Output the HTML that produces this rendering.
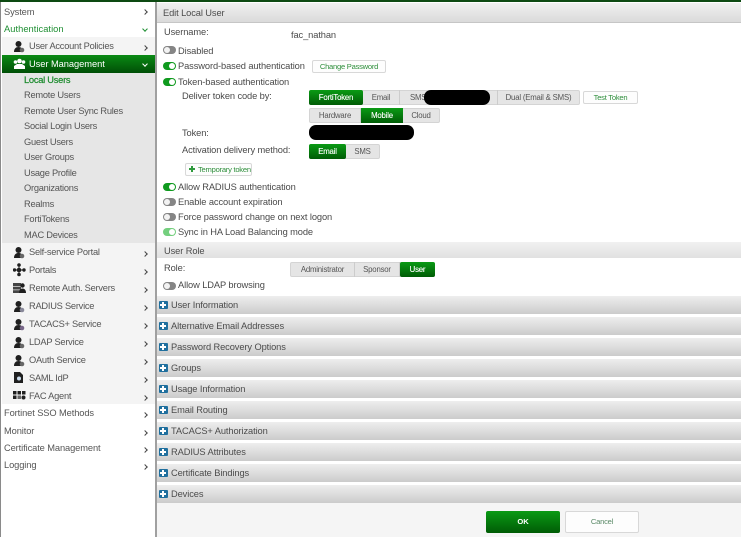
<!DOCTYPE html>
<html><head><meta charset="utf-8"><style>
html,body{margin:0;padding:0;background:#fff}
#p{position:relative;width:741px;height:537px;overflow:hidden;background:#fff;font-family:"Liberation Sans",sans-serif;font-size:9.3px;letter-spacing:-.1px;color:#4a4a4a;filter:blur(.3px)}
#p div{position:absolute;white-space:nowrap}
.t{line-height:12px;height:12px;margin-top:1.5px}
.n{color:#555}
.sub{letter-spacing:-.25px}
.bar{left:157px;width:584px;height:18px;background:linear-gradient(#eeeeee,#cbcbcb)}
.bt{left:171px;line-height:18px;color:#4c4c4c}
.pl{left:159px;width:8.500px;height:8.500px;margin-top:.5px;border-radius:1px;background:linear-gradient(#fff,#fff) center/6px 2px no-repeat,linear-gradient(#fff,#fff) center/2px 6px no-repeat,#1f6f9e}
.chev{left:143px;width:3px;height:3px;border-top:1.2px solid #444;border-right:1.2px solid #444;transform:rotate(45deg)}
.tog{left:163px;width:13px;height:8px;margin-top:-.5px;border-radius:4px;background:#0f9a1e}
.tog:after{content:"";position:absolute;right:1px;top:1px;width:6px;height:6px;border-radius:50%;background:#fff}
.off{background:#858585}.off:after{right:auto;left:1px;background:#f3f3f3}
.lt{background:#74cf7e}
.seg{height:15px;background:#e5e5e5;border:1px solid #d4d4d4;border-radius:2px;box-sizing:border-box}
.s{top:-1px;height:15px;line-height:15px;text-align:center;font-size:7.8px;letter-spacing:-.2px;color:#555;border-right:1px solid #ccc;box-sizing:border-box}
.on{background:linear-gradient(#0a9a14,#005c05);color:#fff;border-radius:2px;border:0;-webkit-text-stroke:.12px #fff}
.btn{background:#fdfdfd;border:1px solid #d8d8d8;border-radius:2px;box-sizing:border-box;color:#2f8f3c;font-size:7.600px;letter-spacing:-.25px;text-align:center}
.blk{background:#000;border-radius:7px}
</style></head><body><div id="p">
<div style="left:0;top:0;width:741px;height:2px;background:#0d4a12"></div>
<div style="left:0;top:2px;width:1px;height:535px;background:#8a8a8a"></div>
<div style="left:155px;top:2px;width:1.500px;height:535px;background:#a0a0a0"></div>

<div style="left:2px;top:37px;width:153px;height:367px;background:#f4f4f4"></div>
<div style="left:2px;top:55px;width:153px;height:18px;background:linear-gradient(#0a8a14,#004f06)"></div>
<div style="left:2px;top:73px;width:153px;height:170px;background:#e6e6e6"></div>

<div class="t n" style="left:4px;top:4px">System</div>
<div class="t" style="left:4px;top:21px;color:#1f8f33;letter-spacing:.05px">Authentication</div>
<div class="t n sub" style="left:29px;top:38.500px">User Account Policies</div>
<div class="t" style="left:29px;top:56px;color:#fff;letter-spacing:-.05px">User Management</div>
<div class="t sub" style="left:24px;top:72px;color:#1a8a2c;-webkit-text-stroke:.2px #1a8a2c">Local Users</div>
<div class="t n sub" style="left:24px;top:87.500px">Remote Users</div>
<div class="t n sub" style="left:24px;top:103px">Remote User Sync Rules</div>
<div class="t n sub" style="left:24px;top:118.500px">Social Login Users</div>
<div class="t n sub" style="left:24px;top:134px">Guest Users</div>
<div class="t n sub" style="left:24px;top:149.500px">User Groups</div>
<div class="t n sub" style="left:24px;top:165px">Usage Profile</div>
<div class="t n sub" style="left:24px;top:180.500px">Organizations</div>
<div class="t n sub" style="left:24px;top:196px">Realms</div>
<div class="t n sub" style="left:24px;top:211.500px">FortiTokens</div>
<div class="t n sub" style="left:24px;top:227.500px">MAC Devices</div>
<div class="t n sub" style="left:29px;top:244px">Self-service Portal</div>
<div class="t n sub" style="left:29px;top:262px">Portals</div>
<div class="t n sub" style="left:29px;top:280px">Remote Auth. Servers</div>
<div class="t n sub" style="left:29px;top:298px">RADIUS Service</div>
<div class="t n sub" style="left:29px;top:316px">TACACS+ Service</div>
<div class="t n sub" style="left:29px;top:334px">LDAP Service</div>
<div class="t n sub" style="left:29px;top:352px">OAuth Service</div>
<div class="t n sub" style="left:29px;top:370px">SAML IdP</div>
<div class="t n sub" style="left:29px;top:388px">FAC Agent</div>
<div class="t n" style="left:4px;top:405px">Fortinet SSO Methods</div>
<div class="t n" style="left:4px;top:423px">Monitor</div>
<div class="t n" style="left:4px;top:440px">Certificate Management</div>
<div class="t n" style="left:4px;top:457px">Logging</div>

<div class="chev" style="top:10px"></div>
<div class="chev" style="top:27px;transform:rotate(135deg);border-color:#1f8f33"></div>
<div class="chev" style="top:46px"></div>
<div class="chev" style="top:62px;transform:rotate(135deg);border-color:#fff"></div>
<div class="chev" style="top:252px"></div><div class="chev" style="top:270px"></div><div class="chev" style="top:288px"></div><div class="chev" style="top:306px"></div><div class="chev" style="top:324px"></div><div class="chev" style="top:342px"></div><div class="chev" style="top:360px"></div><div class="chev" style="top:378px"></div><div class="chev" style="top:396px"></div><div class="chev" style="top:413px"></div><div class="chev" style="top:431px"></div><div class="chev" style="top:448px"></div><div class="chev" style="top:465px"></div>

<svg style="position:absolute;left:13px;top:0" width="14" height="410" fill="#1f1f1f">
<g><circle cx="5.500" cy="44" r="3"/><path d="M1 52c0-3.500 2-5 4.500-5s4.500 1.500 4.500 5z"/><circle cx="9" cy="50" r="2.300" fill="#666"/></g>
<g fill="#fff"><circle cx="6.500" cy="61" r="2.300"/><circle cx="2.500" cy="62" r="1.800"/><circle cx="10.500" cy="62" r="1.800"/><path d="M1 69v-3l3-2h5l3 2v3z"/></g>
<g><circle cx="5.500" cy="250" r="3"/><path d="M1 258c0-3.500 2-5 4.500-5s4.500 1.500 4.500 5z"/><circle cx="9" cy="256" r="2.300" fill="#666"/></g>
<g><circle cx="6" cy="265" r="1.800"/><circle cx="1.500" cy="270" r="1.700"/><circle cx="11" cy="270" r="1.700"/><circle cx="6" cy="270" r="2.300"/><circle cx="6" cy="274.500" r="1.800"/><path d="M1 269.500h10v1H1zM5.500 265h1v9h-1z"/></g>
<g><rect x="0" y="283" width="8" height="10" fill="#444"/><path d="M0 286h8v.8H0zM0 289.500h8v.8H0z" fill="#ddd"/><circle cx="9.500" cy="285.500" r="2.200"/><path d="M6 293c0-3 1.500-4.500 3.500-4.500s3.500 1.500 3.500 4.500z"/></g>
<g><circle cx="5.500" cy="304" r="3"/><path d="M1 312c0-3.500 2-5 4.500-5s4.500 1.500 4.500 5z"/><circle cx="9" cy="310" r="2.300" fill="#889"/></g>
<g><circle cx="5.500" cy="322" r="3"/><path d="M1 330c0-3.500 2-5 4.500-5s4.500 1.500 4.500 5z"/><circle cx="9" cy="328" r="2.300" fill="#768"/></g>
<g><circle cx="5.500" cy="340" r="3"/><path d="M1 348c0-3.500 2-5 4.500-5s4.500 1.500 4.500 5z"/><circle cx="9" cy="346" r="2.300" fill="#666"/></g>
<g><circle cx="5.500" cy="358" r="3"/><path d="M1 366c0-3.500 2-5 4.500-5s4.500 1.500 4.500 5z"/><circle cx="9" cy="364" r="2.300" fill="#666"/></g>
<g><path d="M1 372h6l3 3v8H1z"/><circle cx="6" cy="378.500" r="2" fill="#cde"/></g>
<g><rect x="0" y="391" width="3.500" height="3.500"/><rect x="4.500" y="391" width="3.500" height="3.500"/><rect x="9" y="391" width="3.500" height="3.500"/><rect x="0" y="395.500" width="3.500" height="3.500"/><rect x="4.500" y="395.500" width="3.500" height="3.500" fill="#666"/><circle cx="10.500" cy="397.500" r="2"/></g>
</svg>

<div class="bar" style="top:3px;height:19px;background:linear-gradient(#f0f0f0,#dadada);border-bottom:1px solid #c6c6c6"></div>
<div class="t" style="left:163px;top:5px;color:#4c4c4c">Edit Local User</div>
<div class="t" style="left:164px;top:24.500px">Username:</div>
<div class="t" style="left:291px;top:27.500px">fac_nathan</div>

<div class="tog off" style="top:46px"></div><div class="t" style="left:178px;top:43px">Disabled</div>
<div class="tog" style="top:62px"></div><div class="t" style="left:178px;top:58.500px">Password-based authentication</div>
<div class="btn" style="left:312px;top:60px;width:74px;height:13px;line-height:12px">Change Password</div>
<div class="tog" style="top:78px"></div><div class="t" style="left:178px;top:74.500px">Token-based authentication</div>
<div class="t" style="left:182px;top:88px">Deliver token code by:</div>

<div class="seg" style="left:309px;top:90px;width:271px">
<div class="s on" style="left:-1px;width:54px">FortiToken</div>
<div class="s" style="left:53px;width:37px">Email</div>
<div class="s" style="left:90px;width:30px;text-align:left;padding-left:10px">SMS</div>
<div class="s" style="left:120px;width:68px"></div>
<div class="s" style="left:188px;width:81px;border:0">Dual (Email &amp; SMS)</div>
</div>
<div class="blk" style="left:424px;top:90px;width:66px;height:15px"></div>
<div class="btn" style="left:583px;top:91px;width:55px;height:13px;line-height:12px">Test Token</div>

<div class="seg" style="left:309px;top:108px;width:131px">
<div class="s" style="left:0;width:51px">Hardware</div>
<div class="s on" style="left:51px;width:42px;border-radius:0">Mobile</div>
<div class="s" style="left:93px;width:36px;border:0">Cloud</div>
</div>

<div class="t" style="left:182px;top:125px">Token:</div>
<div class="blk" style="left:309px;top:125px;width:105px;height:15px"></div>
<div class="t" style="left:182px;top:142px">Activation delivery method:</div>
<div class="seg" style="left:309px;top:144px;width:71px">
<div class="s on" style="left:-1px;width:37px">Email</div>
<div class="s" style="left:36px;width:33px;border:0">SMS</div>
</div>
<div class="btn" style="left:185px;top:163px;width:67px;height:13px;line-height:12px;text-align:left;padding-left:12px">Temporary token</div>
<div style="left:189px;top:168px;width:6px;height:2px;background:#2e9a3c"></div>
<div style="left:191px;top:166px;width:2px;height:6px;background:#2e9a3c"></div>

<div class="tog" style="top:183px"></div><div class="t" style="left:178px;top:179px">Allow RADIUS authentication</div>
<div class="tog off" style="top:198px"></div><div class="t" style="left:178px;top:194px">Enable account expiration</div>
<div class="tog off" style="top:213px"></div><div class="t" style="left:178px;top:209px">Force password change on next logon</div>
<div class="tog lt" style="top:228px"></div><div class="t" style="left:178px;top:224px">Sync in HA Load Balancing mode</div>

<div class="bar" style="top:242px;height:16px;background:linear-gradient(#f0f0f0,#e0e0e0)"></div>
<div class="t" style="left:164px;top:243px;color:#4c4c4c">User Role</div>
<div class="t" style="left:164px;top:260px">Role:</div>
<div class="seg" style="left:290px;top:262px;width:145px">
<div class="s" style="left:0;width:64px">Administrator</div>
<div class="s" style="left:64px;width:45px">Sponsor</div>
<div class="s on" style="left:109px;width:35px">User</div>
</div>
<div class="tog off" style="top:282px"></div><div class="t" style="left:178px;top:277.500px">Allow LDAP browsing</div>

<div class="bar" style="top:296px"></div><div class="pl" style="top:300px"></div><div class="bt" style="top:296px">User Information</div>
<div class="bar" style="top:317px"></div><div class="pl" style="top:321px"></div><div class="bt" style="top:317px">Alternative Email Addresses</div>
<div class="bar" style="top:338px"></div><div class="pl" style="top:342px"></div><div class="bt" style="top:338px">Password Recovery Options</div>
<div class="bar" style="top:359px"></div><div class="pl" style="top:363px"></div><div class="bt" style="top:359px">Groups</div>
<div class="bar" style="top:380px"></div><div class="pl" style="top:384px"></div><div class="bt" style="top:380px">Usage Information</div>
<div class="bar" style="top:401px"></div><div class="pl" style="top:405px"></div><div class="bt" style="top:401px">Email Routing</div>
<div class="bar" style="top:422px"></div><div class="pl" style="top:426px"></div><div class="bt" style="top:422px">TACACS+ Authorization</div>
<div class="bar" style="top:443px"></div><div class="pl" style="top:447px"></div><div class="bt" style="top:443px">RADIUS Attributes</div>
<div class="bar" style="top:464px"></div><div class="pl" style="top:468px"></div><div class="bt" style="top:464px">Certificate Bindings</div>
<div class="bar" style="top:485px"></div><div class="pl" style="top:489px"></div><div class="bt" style="top:485px">Devices</div>

<div style="left:157px;top:503px;width:584px;height:34px;background:#f5f5f5"></div>
<div style="left:486px;top:511px;width:74px;height:22px;border-radius:2px;background:linear-gradient(#0a9a14,#005c05);color:#fff;font-weight:bold;font-size:7.600px;line-height:22px;text-align:center">OK</div>
<div class="btn" style="left:565px;top:511px;width:74px;height:22px;line-height:20px;color:#5b8a68">Cancel</div>
</div></body></html>
